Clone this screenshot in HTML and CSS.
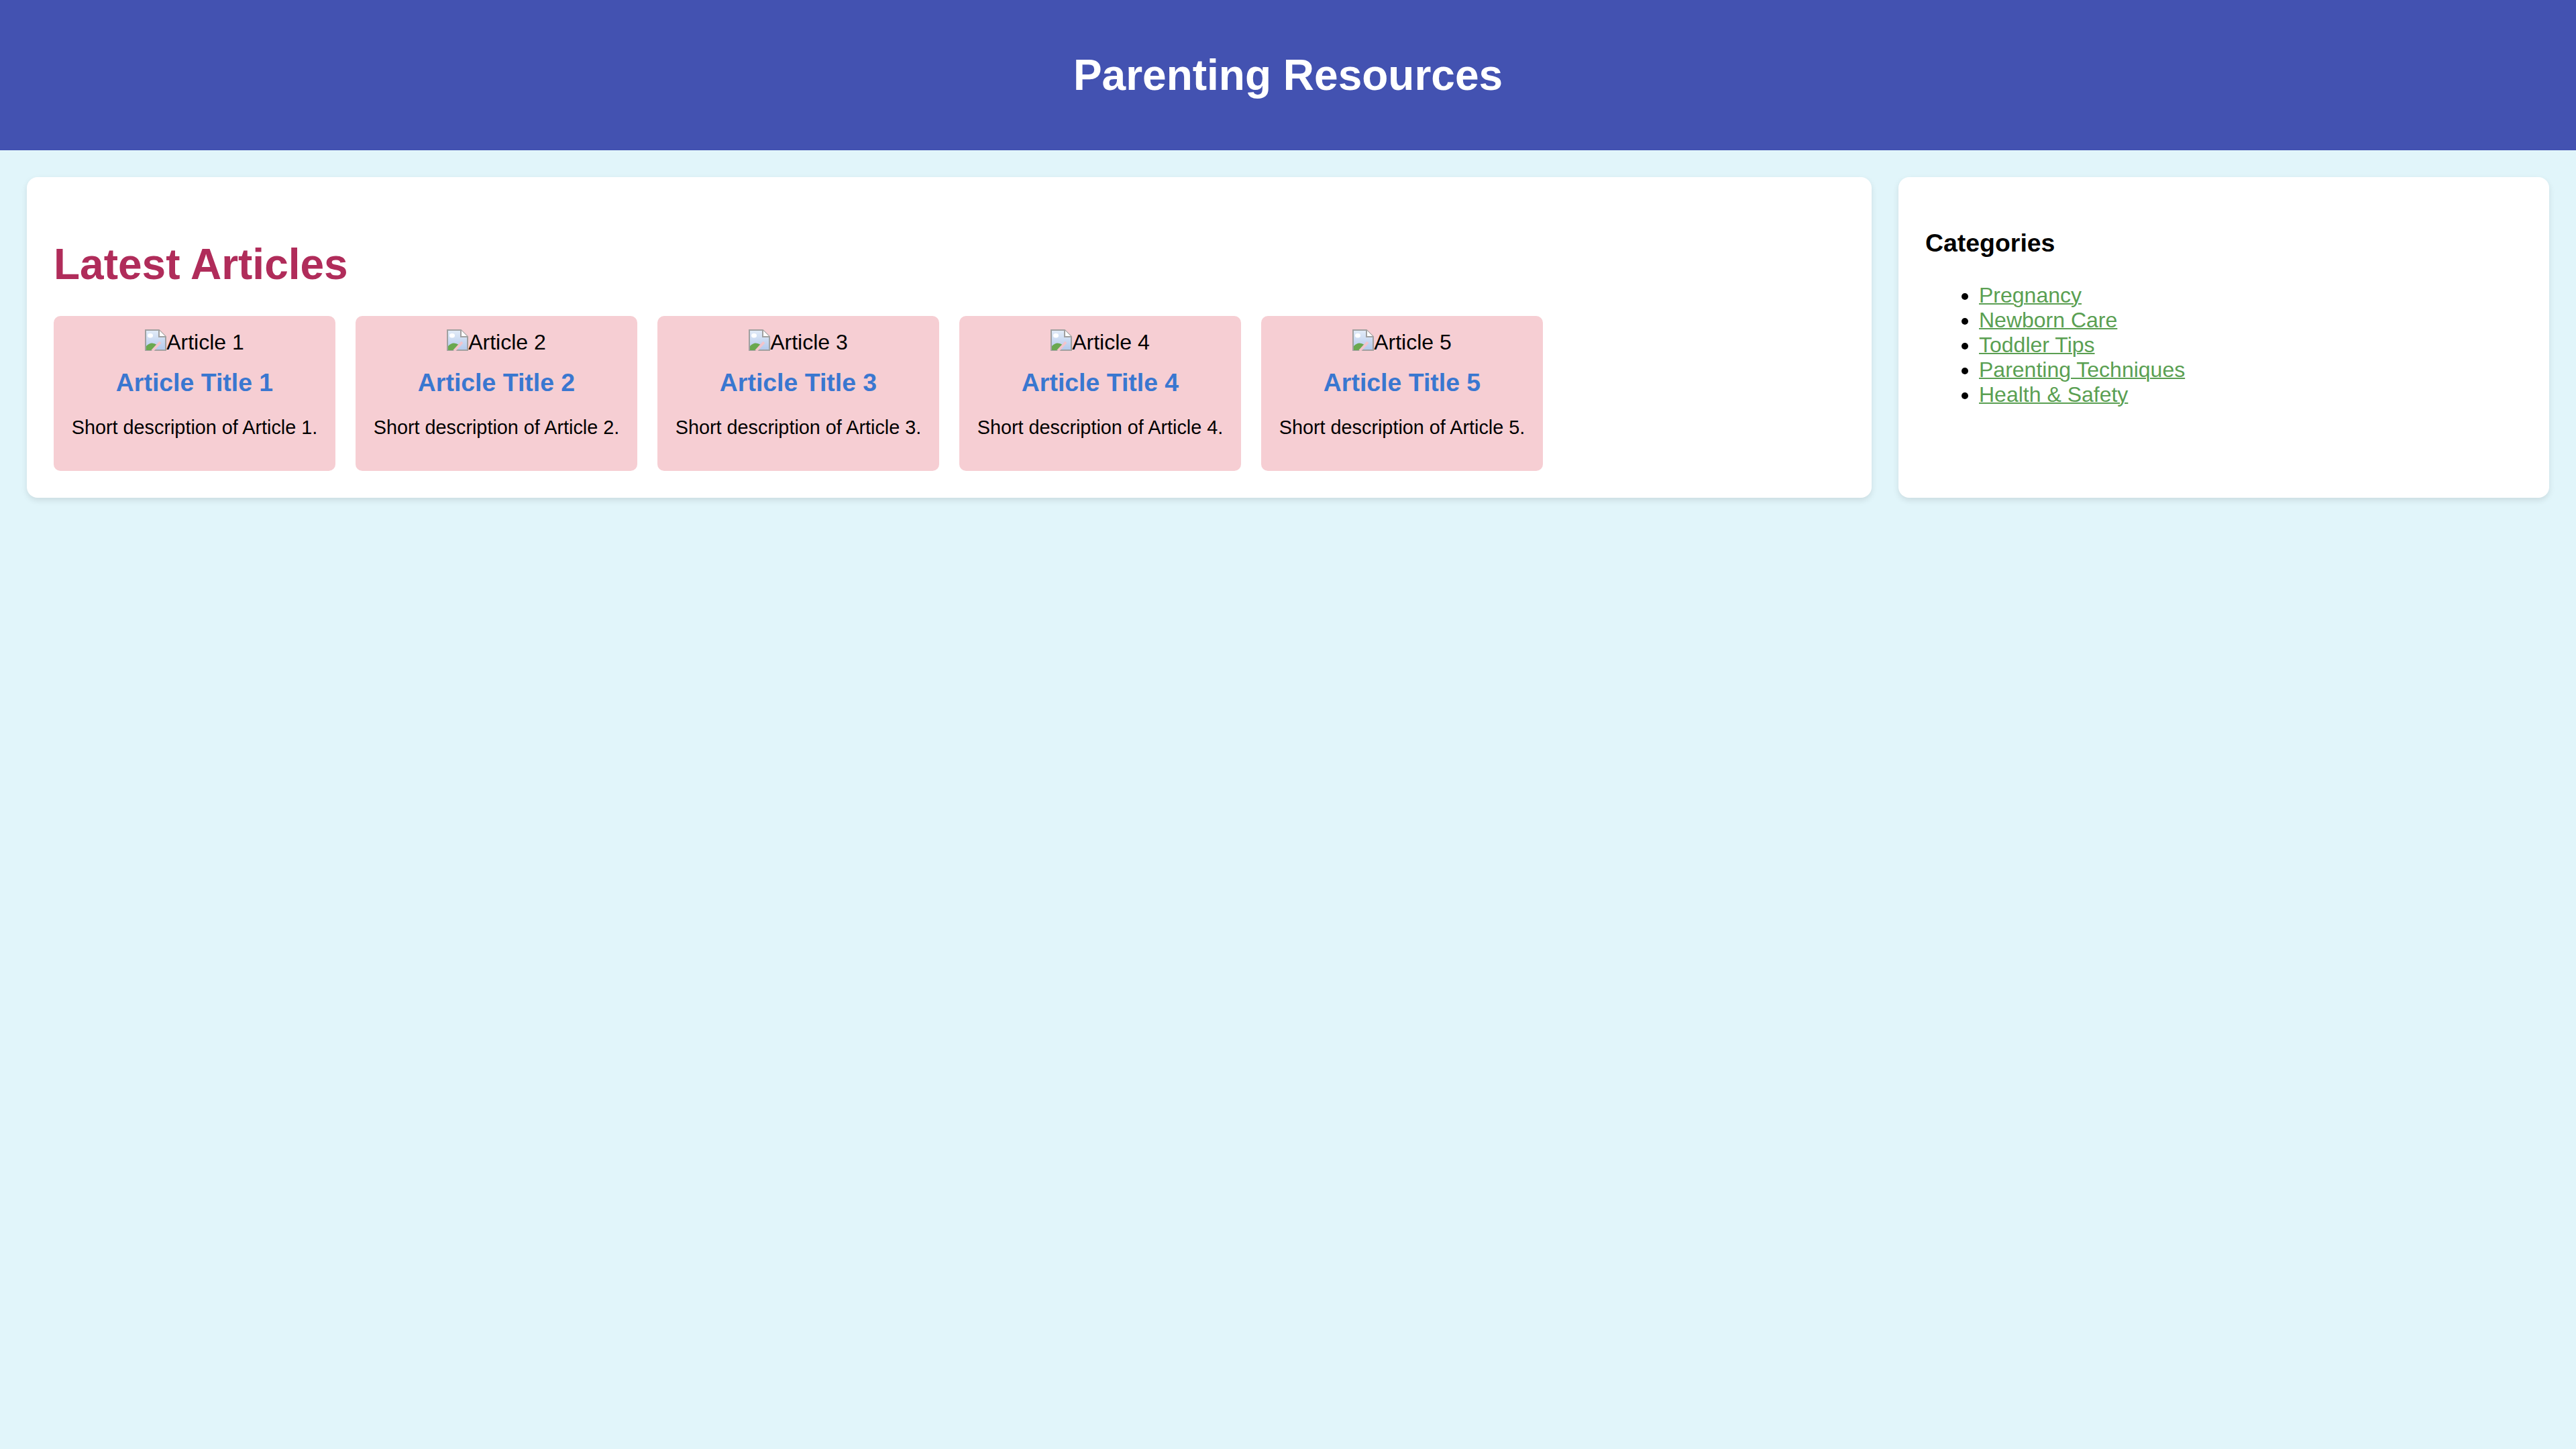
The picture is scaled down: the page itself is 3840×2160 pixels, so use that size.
FILE: index.html
```html
<!DOCTYPE html>
<html lang="en">
<head>
<meta charset="utf-8">
<title>Parenting Resources</title>
<link rel="stylesheet" href="styles.css">
</head>
<body>
<header class="site-header">
  <h1>Parenting Resources</h1>
</header>
<div class="layout">
  <main class="panel articles-panel">
    <h2 class="section-title">Latest Articles</h2>
    <div class="article-list">
      <article class="article-card">
        <span class="broken-img"><svg class="broken-icon" viewBox="0 0 16 16"><defs><linearGradient id="g1" x1="0" y1="0" x2="0" y2="1"><stop offset="0" stop-color="#e3ecf8"/><stop offset="1" stop-color="#b3c9ec"/></linearGradient></defs><path d="M0.5 0.5H10.5L15.5 5.5V15.5H0.5Z" fill="url(#g1)" stroke="#a0a0a0"/><path d="M10.5 0.5V5.5H15.5" fill="#fff" stroke="#a0a0a0"/><ellipse cx="4" cy="4.6" rx="2" ry="1.6" fill="#fff"/><path d="M1 15.5V12.5Q4.5 8.5 9 11.5L5.5 15.5Z" fill="#6aa84f"/><path d="M5.5 16L11.5 9.5" stroke="#f2c4cc" stroke-width="2"/></svg>Article 1</span>
        <h3 class="article-title">Article Title 1</h3>
        <p class="article-desc">Short description of Article 1.</p>
      </article>
      <article class="article-card">
        <span class="broken-img"><svg class="broken-icon" viewBox="0 0 16 16"><path d="M0.5 0.5H10.5L15.5 5.5V15.5H0.5Z" fill="url(#g1)" stroke="#a0a0a0"/><path d="M10.5 0.5V5.5H15.5" fill="#fff" stroke="#a0a0a0"/><ellipse cx="4" cy="4.6" rx="2" ry="1.6" fill="#fff"/><path d="M1 15.5V12.5Q4.5 8.5 9 11.5L5.5 15.5Z" fill="#6aa84f"/><path d="M5.5 16L11.5 9.5" stroke="#f2c4cc" stroke-width="2"/></svg>Article 2</span>
        <h3 class="article-title">Article Title 2</h3>
        <p class="article-desc">Short description of Article 2.</p>
      </article>
      <article class="article-card">
        <span class="broken-img"><svg class="broken-icon" viewBox="0 0 16 16"><path d="M0.5 0.5H10.5L15.5 5.5V15.5H0.5Z" fill="url(#g1)" stroke="#a0a0a0"/><path d="M10.5 0.5V5.5H15.5" fill="#fff" stroke="#a0a0a0"/><ellipse cx="4" cy="4.6" rx="2" ry="1.6" fill="#fff"/><path d="M1 15.5V12.5Q4.5 8.5 9 11.5L5.5 15.5Z" fill="#6aa84f"/><path d="M5.5 16L11.5 9.5" stroke="#f2c4cc" stroke-width="2"/></svg>Article 3</span>
        <h3 class="article-title">Article Title 3</h3>
        <p class="article-desc">Short description of Article 3.</p>
      </article>
      <article class="article-card">
        <span class="broken-img"><svg class="broken-icon" viewBox="0 0 16 16"><path d="M0.5 0.5H10.5L15.5 5.5V15.5H0.5Z" fill="url(#g1)" stroke="#a0a0a0"/><path d="M10.5 0.5V5.5H15.5" fill="#fff" stroke="#a0a0a0"/><ellipse cx="4" cy="4.6" rx="2" ry="1.6" fill="#fff"/><path d="M1 15.5V12.5Q4.5 8.5 9 11.5L5.5 15.5Z" fill="#6aa84f"/><path d="M5.5 16L11.5 9.5" stroke="#f2c4cc" stroke-width="2"/></svg>Article 4</span>
        <h3 class="article-title">Article Title 4</h3>
        <p class="article-desc">Short description of Article 4.</p>
      </article>
      <article class="article-card">
        <span class="broken-img"><svg class="broken-icon" viewBox="0 0 16 16"><path d="M0.5 0.5H10.5L15.5 5.5V15.5H0.5Z" fill="url(#g1)" stroke="#a0a0a0"/><path d="M10.5 0.5V5.5H15.5" fill="#fff" stroke="#a0a0a0"/><ellipse cx="4" cy="4.6" rx="2" ry="1.6" fill="#fff"/><path d="M1 15.5V12.5Q4.5 8.5 9 11.5L5.5 15.5Z" fill="#6aa84f"/><path d="M5.5 16L11.5 9.5" stroke="#f2c4cc" stroke-width="2"/></svg>Article 5</span>
        <h3 class="article-title">Article Title 5</h3>
        <p class="article-desc">Short description of Article 5.</p>
      </article>
    </div>
  </main>
  <aside class="panel sidebar">
    <h3 class="sidebar-title">Categories</h3>
    <ul class="category-list">
      <li><a href="#">Pregnancy</a></li>
      <li><a href="#">Newborn Care</a></li>
      <li><a href="#">Toddler Tips</a></li>
      <li><a href="#">Parenting Techniques</a></li>
      <li><a href="#">Health &amp; Safety</a></li>
    </ul>
  </aside>
</div>
</body>
</html>
```

FILE: styles.css
```css
html, body {
  margin: 0;
  padding: 0;
}

body {
  background: #e1f5fa;
  font-family: "Liberation Sans", Arial, sans-serif;
  font-size: 32px;
  color: #000;
  min-height: 2160px;
}

.site-header {
  background: #4352b1;
  color: #fff;
  text-align: center;
  padding: 32px;
}

.site-header h1 {
  margin: 42.88px 0;
  font-size: 64px;
  font-weight: bold;
}

.layout {
  display: flex;
  align-items: stretch;
  gap: 40px;
  padding: 40px 40px 0;
}

.panel {
  background: #fff;
  padding: 40px;
  border-radius: 16px;
  box-shadow: 0 4px 10px rgba(0, 0, 0, 0.1);
}

.articles-panel {
  flex: 3 1 0%;
}

.sidebar {
  flex: 1 1 0%;
}

.section-title {
  color: #b02c5a;
  font-size: 64px;
  margin: 53.12px 0 40px;
}

.article-list {
  display: flex;
  gap: 30px;
}

.article-card {
  flex: 0 0 380px;
  padding: 20px;
  background: #f6ced3;
  border-radius: 10px;
  text-align: center;
}

.broken-img {
  font-size: 32px;
}

.broken-icon {
  width: 32px;
  height: 32px;
  vertical-align: -2px;
}

.article-title {
  color: #3a77d0;
  font-size: 37.44px;
  margin: 20px 0;
}

.article-desc {
  font-size: 28.8px;
  margin: 28.8px 0;
}

.sidebar-title {
  font-size: 37.44px;
  margin: 37.44px 0;
}

.category-list {
  margin: 32px 0;
  padding-left: 80px;
}

.category-list a {
  color: #5a9f52;
  text-decoration: underline;
  text-decoration-thickness: 2px;
}
```
